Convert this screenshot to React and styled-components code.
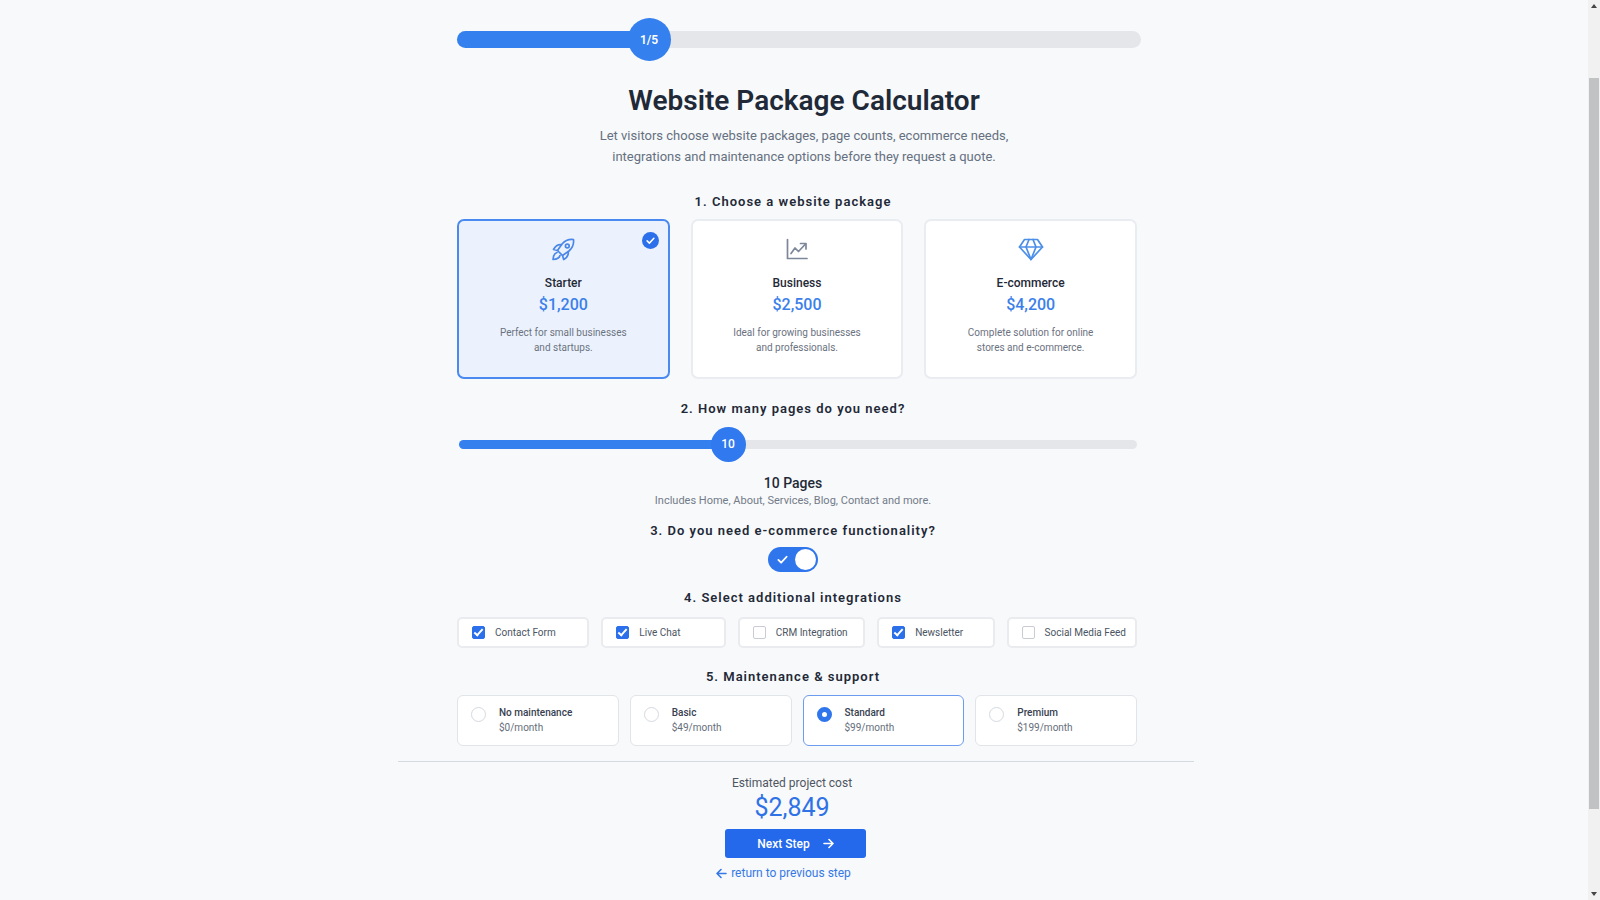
import { useState } from "react";
import styled, { createGlobalStyle } from "styled-components";

const GlobalStyle = createGlobalStyle`
  *, *::after {
    box-sizing: border-box;
  }

  body {
    margin: 0;
    background: #f7f9fb;
    color: #1f2937;
    font-family: Roboto, Inter, "Liberation Sans", sans-serif;
  }

  h1, h2, p, fieldset {
    margin: 0;
    padding: 0;
    border: 0;
    min-width: 0;
  }
`;

const Page = styled.div`
  display: flex;
  align-items: flex-start;
  min-height: 100vh;
`;

const Main = styled.main`
  flex: 1;
  padding: 18px 0 12px 4px;
`;

const Column = styled.div`
  max-width: 796px;
  margin: 0 auto;
`;

const Inner = styled.div`
  padding: 0 57px 0 59px;
`;

const Progress = styled.div`
  display: flex;
  align-items: center;
  height: 43px;
  margin-right: -4px;
`;

const ProgressTrack = styled.div`
  flex: 1;
  height: 17px;
  border-radius: 9px;
  background: #e4e6e9;
`;

const ProgressFill = styled.div`
  position: relative;
  height: 100%;
  border-radius: 9px;
  background: #3480ee;
`;

const ProgressBadge = styled.span`
  position: absolute;
  right: -22px;
  top: -13px;
  display: flex;
  align-items: center;
  justify-content: center;
  width: 43px;
  height: 43px;
  border-radius: 50%;
  background: #3480ee;
  color: #fff;
  font-size: 12px;
  font-weight: 600;
`;

const Header = styled.header`
  padding: 22px 0 0 14px;
  text-align: center;
`;

const Title = styled.h1`
  font-size: 28px;
  font-weight: 600;
  line-height: 36px;
`;

const Lead = styled.p`
  max-width: 424px;
  margin: 6px auto 0;
  color: #667080;
  font-size: 13px;
  line-height: 21px;
`;

const Section = styled.fieldset`
  margin-top: ${(props) => props.$gap}px;
`;

const SectionTitle = styled.legend`
  width: 100%;
  padding: 0 8px 0 0;
  font-size: 13px;
  font-weight: 600;
  line-height: 20px;
  letter-spacing: 1px;
  text-align: center;
`;

const HiddenInput = styled.input`
  position: absolute;
  width: 1px;
  height: 1px;
  margin: 0;
  opacity: 0;
`;

const Packages = styled.div`
  display: grid;
  grid-template-columns: repeat(3, 1fr);
  gap: 21px;
  margin-top: 7px;
`;

const PackageCard = styled.label`
  position: relative;
  display: flex;
  flex-direction: column;
  align-items: center;
  min-height: 160px;
  padding: 15px 20px;
  border: 2px solid ${(props) => (props.$active ? "#4a8af0" : "#e9ecf0")};
  border-radius: 7px;
  background: ${(props) => (props.$active ? "#ecf2fd" : "#fff")};
  text-align: center;
  cursor: pointer;
`;

const PackageIcon = styled.svg`
  width: 26px;
  height: 26px;
  fill: none;
  stroke: ${(props) => props.$color};
  stroke-width: 1.7;
  stroke-linecap: round;
  stroke-linejoin: round;
`;

const PackageBadge = styled.span`
  position: absolute;
  top: 11px;
  right: 9px;
  display: flex;
  align-items: center;
  justify-content: center;
  width: 17px;
  height: 17px;
  border-radius: 50%;
  background: #2b70ea;
`;

const PackageName = styled.span`
  margin-top: 12px;
  font-size: 12px;
  font-weight: 500;
  line-height: 18px;
`;

const PackagePrice = styled.span`
  margin-top: 2px;
  color: #3b80ea;
  font-size: 16px;
  font-weight: 500;
  line-height: 22px;
`;

const PackageText = styled.span`
  max-width: 140px;
  margin-top: 9px;
  color: #6b7280;
  font-size: 10px;
  line-height: 15px;
`;

const Slider = styled.div`
  position: relative;
  height: 36px;
  margin: 7px 0 0 2px;
`;

const Range = styled.input`
  appearance: none;
  display: block;
  width: 100%;
  height: 36px;
  margin: 0;
  background: transparent;
  cursor: pointer;

  &::-webkit-slider-runnable-track {
    height: 9px;
    border-radius: 5px;
    background: linear-gradient(
      to right,
      #3480ee ${(props) => props.$percent}%,
      #e4e6e9 ${(props) => props.$percent}%
    );
  }

  &::-webkit-slider-thumb {
    appearance: none;
    width: 35px;
    height: 35px;
    margin-top: -13px;
    border-radius: 50%;
    background: #3079ee;
  }
`;

const RangeValue = styled.output`
  position: absolute;
  top: 0;
  width: 35px;
  color: #fff;
  font-size: 12px;
  font-weight: 500;
  line-height: 36px;
  text-align: center;
  pointer-events: none;
`;

const Summary = styled.div`
  padding-right: 8px;
  text-align: center;
`;

const PageCount = styled.p`
  margin-top: 11px;
  font-size: 14px;
  font-weight: 500;
  line-height: 20px;
`;

const Hint = styled.p`
  color: #737b88;
  font-size: 11px;
  line-height: 16px;
`;

const SwitchRow = styled.div`
  display: flex;
  justify-content: center;
  margin-top: 6px;
  padding-right: 8px;
`;

const Switch = styled.label`
  display: flex;
  flex-direction: ${(props) => (props.$on ? "row" : "row-reverse")};
  align-items: center;
  justify-content: space-between;
  width: 50px;
  height: 25px;
  padding: ${(props) => (props.$on ? "0 2px 0 9px" : "0 9px 0 2px")};
  border-radius: 13px;
  background: ${(props) => (props.$on ? "#2f75ec" : "#cfd4db")};
  cursor: pointer;
`;

const Knob = styled.span`
  width: 21px;
  height: 21px;
  border-radius: 50%;
  background: #fff;
`;

const Integrations = styled.div`
  display: grid;
  grid-template-columns: 133fr 125fr 128fr 118fr 131fr;
  gap: 12px;
  margin-top: 9px;
`;

const IntegrationCard = styled.label`
  display: flex;
  align-items: center;
  gap: 10px;
  min-width: 0;
  height: 31px;
  padding: 0 0 0 13px;
  border: 2px solid #e9ebee;
  border-radius: 5px;
  background: #fff;
  color: #4b5563;
  font-size: 10px;
  white-space: nowrap;
  cursor: pointer;
`;

const CheckBox = styled.input`
  appearance: none;
  display: flex;
  justify-content: center;
  flex-shrink: 0;
  width: 13px;
  height: 13px;
  margin: 0;
  border: 1px solid #c9cdd3;
  border-radius: 2px;
  background: #fff;

  &:checked {
    border-color: #2b70ea;
    background: #2b70ea;
  }

  &:checked::after {
    content: "";
    width: 5px;
    height: 9px;
    border: solid #fff;
    border-width: 0 2px 2px 0;
    transform: rotate(42deg);
  }
`;

const Plans = styled.div`
  display: grid;
  grid-template-columns: repeat(4, 1fr);
  gap: 11px;
  margin-top: 8px;
`;

const PlanCard = styled.label`
  display: flex;
  align-items: flex-start;
  gap: 13px;
  height: 51px;
  padding: 9px 13px;
  border: 1px solid ${(props) => (props.$active ? "#6d9bf0" : "#e1e4e8")};
  border-radius: 6px;
  background: #fff;
  cursor: pointer;
`;

const Radio = styled.input`
  appearance: none;
  width: 15px;
  height: 15px;
  margin: 2px 0 0;
  border: 1px solid #d5d9de;
  border-radius: 50%;
  background: #fff;

  &:checked {
    border: 5px solid #2f75ec;
  }
`;

const PlanText = styled.span`
  display: flex;
  flex-direction: column;
  color: #666e7b;
  font-size: 10px;
  line-height: 15px;
`;

const PlanName = styled.span`
  color: #374151;
  font-weight: 500;
`;

const Divider = styled.hr`
  height: 1px;
  margin: 15px 0 0;
  border: 0;
  background: #d5dae0;
`;

const Total = styled.footer`
  display: flex;
  flex-direction: column;
  align-items: center;
  padding: 11px 8px 0 0;
`;

const TotalLabel = styled.span`
  color: #4f5661;
  font-size: 12px;
  line-height: 20px;
`;

const TotalPrice = styled.strong`
  color: #2f72e6;
  font-size: 25px;
  font-weight: 400;
  line-height: 30px;
`;

const Actions = styled.div`
  display: flex;
  flex-direction: column;
  align-items: center;
  margin-top: 6px;
  padding-left: 7px;
`;

const NextButton = styled.button`
  display: flex;
  align-items: center;
  justify-content: center;
  gap: 13px;
  width: 141px;
  height: 29px;
  padding: 0;
  border: 0;
  border-radius: 3px;
  background: #2468ec;
  color: #fff;
  font: inherit;
  font-size: 12px;
  font-weight: 500;
  cursor: pointer;
`;

const BackLink = styled.a`
  display: flex;
  align-items: center;
  gap: 4px;
  margin: 5px 24px 0 0;
  color: #3678e6;
  font-size: 12px;
  line-height: 20px;
  text-decoration: none;
`;

const LineIcon = styled.svg`
  fill: none;
  stroke: currentColor;
  stroke-width: 1.6;
  stroke-linecap: round;
  stroke-linejoin: round;
`;

const ScrollRail = styled.div`
  position: sticky;
  top: 0;
  display: flex;
  flex-direction: column;
  align-items: center;
  width: 12px;
  height: 100vh;
  padding: 4px 0;
  background: #f1f1f1;
`;

const ScrollThumb = styled.div`
  width: 10px;
  height: 82%;
  margin: 70px 0 auto;
  background: #c1c2c3;
`;

const ScrollArrow = styled.span`
  width: 0;
  height: 0;
  border: 3px solid transparent;
  border-top: ${(props) => (props.$down ? "4px solid #444" : "0")};
  border-bottom: ${(props) => (props.$down ? "0" : "4px solid #444")};
`;

const packages = [
  {
    id: "starter",
    name: "Starter",
    price: "$1,200",
    text: "Perfect for small businesses and startups.",
    color: "#4a87e8",
    icon: (
      <>
        <path d="M22.5 2.5C18 2 14 3.5 11 7l-4.5 6.5 5 5L18 14c3.5-3 5-7 4.5-11.5Z" />
        <circle cx="16.3" cy="9" r="1.9" />
        <path d="M10.5 7.8C7 7.3 4.5 9 2.5 12.5l4 1" />
        <path d="M17.2 14.6c.5 3.3-1 5.9-4.5 7.9l-1.2-4" />
        <path d="M6 15.5c-3 .8-3.8 3.5-4 7 3.5-.2 6.2-1 7-4" />
      </>
    ),
  },
  {
    id: "business",
    name: "Business",
    price: "$2,500",
    text: "Ideal for growing businesses and professionals.",
    color: "#7c8799",
    icon: (
      <>
        <path d="M2.5 2.5v19H22" />
        <path d="M6 16.5 10 11l3.5 3.5 7-7.5" />
        <path d="M15.5 6.5H21V12" />
      </>
    ),
  },
  {
    id: "ecommerce",
    name: "E-commerce",
    price: "$4,200",
    text: "Complete solution for online stores and e-commerce.",
    color: "#4c8fe8",
    icon: (
      <>
        <path d="M5.5 2.5h13l5 7.5L12 22.5.5 10Z" />
        <path d="M.5 10h23" />
        <path d="M10 2.5 7 10l5 12.5L17 10l-3-7.5" />
      </>
    ),
  },
];

const integrations = [
  "Contact Form",
  "Live Chat",
  "CRM Integration",
  "Newsletter",
  "Social Media Feed",
];

const plans = [
  { name: "No maintenance", price: "$0/month" },
  { name: "Basic", price: "$49/month" },
  { name: "Standard", price: "$99/month" },
  { name: "Premium", price: "$199/month" },
];

const MIN_PAGES = 1;
const MAX_PAGES = 24;

const Tick = ({ size }) => (
  <svg width={size} height={size} viewBox="0 0 12 12" fill="none" stroke="#fff" strokeWidth="2" strokeLinecap="round" strokeLinejoin="round">
    <path d="M1.5 6.5l3 3 6-6.5" />
  </svg>
);

const App = () => {
  const [selected, setSelected] = useState("starter");
  const [pages, setPages] = useState(10);
  const [ecommerce, setEcommerce] = useState(true);
  const [extras, setExtras] = useState(["Contact Form", "Live Chat", "Newsletter"]);
  const [plan, setPlan] = useState("Standard");

  const ratio = (pages - MIN_PAGES) / (MAX_PAGES - MIN_PAGES);

  const toggleExtra = (name) => {
    setExtras(
      extras.includes(name) ? extras.filter((item) => item !== name) : [...extras, name]
    );
  };

  return (
    <Page>
      <GlobalStyle />
      <Main>
        <Column>
          <Inner>
            <Progress>
              <ProgressTrack role="progressbar" aria-valuenow={1} aria-valuemin={0} aria-valuemax={5} aria-label="Step">
                <ProgressFill style={{ width: "28%" }}>
                  <ProgressBadge>1/5</ProgressBadge>
                </ProgressFill>
              </ProgressTrack>
            </Progress>

            <Header>
              <Title>Website Package Calculator</Title>
              <Lead>
                Let visitors choose website packages, page counts, ecommerce needs,
                integrations and maintenance options before they request a quote.
              </Lead>
            </Header>

            <Section $gap={25}>
              <SectionTitle>1. Choose a website package</SectionTitle>
              <Packages>
                {packages.map((item) => (
                  <PackageCard key={item.id} $active={selected === item.id}>
                    <HiddenInput
                      type="radio"
                      name="package"
                      checked={selected === item.id}
                      onChange={() => setSelected(item.id)}
                    />
                    {selected === item.id && (
                      <PackageBadge>
                        <Tick size={9} />
                      </PackageBadge>
                    )}
                    <PackageIcon viewBox="-1 -1 26 26" $color={item.color}>
                      {item.icon}
                    </PackageIcon>
                    <PackageName>{item.name}</PackageName>
                    <PackagePrice>{item.price}</PackagePrice>
                    <PackageText>{item.text}</PackageText>
                  </PackageCard>
                ))}
              </Packages>
            </Section>

            <Section $gap={20}>
              <SectionTitle>2. How many pages do you need?</SectionTitle>
              <Slider>
                <Range
                  type="range"
                  aria-label="Number of pages"
                  min={MIN_PAGES}
                  max={MAX_PAGES}
                  value={pages}
                  onChange={(e) => setPages(Number(e.target.value))}
                  $percent={ratio * 100}
                />
                <RangeValue style={{ left: `calc((100% - 35px) * ${ratio})` }}>{pages}</RangeValue>
              </Slider>
              <Summary>
                <PageCount>{pages} Pages</PageCount>
                <Hint>Includes Home, About, Services, Blog, Contact and more.</Hint>
              </Summary>
            </Section>

            <Section $gap={12}>
              <SectionTitle>3. Do you need e-commerce functionality?</SectionTitle>
              <SwitchRow>
                <Switch $on={ecommerce}>
                  <HiddenInput
                    type="checkbox"
                    role="switch"
                    aria-label="E-commerce functionality"
                    checked={ecommerce}
                    onChange={() => setEcommerce(!ecommerce)}
                  />
                  <Tick size={11} />
                  <Knob />
                </Switch>
              </SwitchRow>
            </Section>

            <Section $gap={16}>
              <SectionTitle>4. Select additional integrations</SectionTitle>
              <Integrations>
                {integrations.map((name) => (
                  <IntegrationCard key={name}>
                    <CheckBox
                      type="checkbox"
                      checked={extras.includes(name)}
                      onChange={() => toggleExtra(name)}
                    />
                    {name}
                  </IntegrationCard>
                ))}
              </Integrations>
            </Section>

            <Section $gap={19}>
              <SectionTitle>5. Maintenance &amp; support</SectionTitle>
              <Plans>
                {plans.map((item) => (
                  <PlanCard key={item.name} $active={plan === item.name}>
                    <Radio
                      type="radio"
                      name="plan"
                      checked={plan === item.name}
                      onChange={() => setPlan(item.name)}
                    />
                    <PlanText>
                      <PlanName>{item.name}</PlanName>
                      {item.price}
                    </PlanText>
                  </PlanCard>
                ))}
              </Plans>
            </Section>
          </Inner>

          <Divider />

          <Total>
            <TotalLabel>Estimated project cost</TotalLabel>
            <TotalPrice>$2,849</TotalPrice>
            <Actions>
              <NextButton type="button">
                Next Step
                <LineIcon width="11" height="11" viewBox="0 0 11 11">
                  <path d="M1 5.5h9M6 1.5l4 4-4 4" />
                </LineIcon>
              </NextButton>
              <BackLink href="#previous">
                <LineIcon width="11" height="11" viewBox="0 0 11 11">
                  <path d="M10 5.5H1M5 1.5l-4 4 4 4" />
                </LineIcon>
                return to previous step
              </BackLink>
            </Actions>
          </Total>
        </Column>
      </Main>
      <ScrollRail aria-hidden="true">
        <ScrollArrow />
        <ScrollThumb />
        <ScrollArrow $down />
      </ScrollRail>
    </Page>
  );
};

export default App;
